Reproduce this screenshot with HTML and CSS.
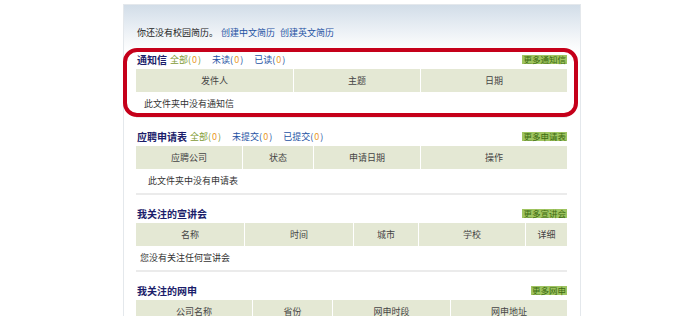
FILE: index.html
```html
<!DOCTYPE html>
<html lang="zh-CN">
<head>
    <meta charset="UTF-8">
    <title>我的求职中心</title>
    <link rel="stylesheet" href="styles.css">
</head>
<body>
    <div class="page">
        <p class="intro">你还没有校园简历。<a href="#">创建中文简历</a> <a href="#">创建英文简历</a></p>

        <!-- 通知信 -->
        <div class="box">
            <div class="box-head">
                <h2>通知信</h2>
                <a class="filter all" href="#">全部(<em>0</em>)</a>
                <a class="filter" href="#">未读(<em>0</em>)</a>
                <a class="filter" href="#">已读(<em>0</em>)</a>
                <a class="more" href="#">更多通知信</a>
            </div>
            <div class="thead cols-mail">
                <div>发件人</div><div>主题</div><div>日期</div>
            </div>
            <div class="empty">此文件夹中没有通知信</div>
        </div>

        <!-- 应聘申请表 -->
        <div class="box">
            <div class="box-head">
                <h2>应聘申请表</h2>
                <a class="filter all" href="#">全部(<em>0</em>)</a>
                <a class="filter" href="#">未提交(<em>0</em>)</a>
                <a class="filter" href="#">已提交(<em>0</em>)</a>
                <a class="more" href="#">更多申请表</a>
            </div>
            <div class="thead cols-apply">
                <div>应聘公司</div><div>状态</div><div>申请日期</div><div>操作</div>
            </div>
            <div class="empty empty-apply">此文件夹中没有申请表</div>
        </div>

        <!-- 宣讲会 -->
        <div class="box">
            <div class="box-head">
                <h2>我关注的宣讲会</h2>
                <a class="more" href="#">更多宣讲会</a>
            </div>
            <div class="thead cols-talk">
                <div>名称</div><div>时间</div><div>城市</div><div>学校</div><div>详细</div>
            </div>
            <div class="empty empty-talk">您没有关注任何宣讲会</div>
        </div>

        <!-- 网申 -->
        <div class="box">
            <div class="box-head">
                <h2>我关注的网申</h2>
                <a class="more" href="#">更多网申</a>
            </div>
            <div class="thead cols-online">
                <div>公司名称</div><div>省份</div><div>网申时段</div><div>网申地址</div>
            </div>
            <div class="empty">您没有关注任何网申</div>
        </div>
    </div>

    <div class="mark"></div>
</body>
</html>
```

FILE: styles.css
```css
body {
    margin: 0;
    background: #fff;
    font-family: "Noto Sans CJK SC", "Noto Sans", sans-serif;
    font-size: 9px;
    color: #333;
}
a {
    text-decoration: none;
}
.page {
    margin: 4px 0 0 123px;
    width: 431px;
    padding: 18px 13px 0 12px;
    border: 1px solid #e4e8ec;
    border-bottom: none;
    background: linear-gradient(to bottom, #d2dde8 0, #e4ebf2 18px, #f6f8fa 36px, #fff 48px) no-repeat;
    min-height: 400px;
}
.intro {
    margin: 0 0 6px;
    padding-left: 1px;
    height: 20px;
    line-height: 20px;
    color: #222;
}
.intro a {
    color: #1d51a3;
    margin-left: 3px;
}
.box {
    border-bottom: 2px solid #ebebeb;
    margin-bottom: 8px;
}
.box-head {
    display: flex;
    align-items: center;
    height: 20px;
    padding-left: 1px;
}
.box-head h2 {
    margin: 0 3px 0 0;
    font-size: 10px;
    font-weight: bold;
    color: #1b1d6a;
}
.filter {
    color: #1d51a3;
    margin-right: 11px;
}
.filter.all {
    color: #7f9a34;
}
.filter em {
    font-style: normal;
    color: #eb9a2a;
    padding: 0 1px;
}
.more {
    margin-left: auto;
    font-size: 8.5px;
    line-height: 9px;
    background: #9fc460;
    color: #3c6b12;
    padding: 0 1px;
}
.thead {
    display: grid;
    gap: 1px;
    height: 23px;
}
.thead div {
    background: #e4e8d4;
    color: #444;
    text-align: center;
    line-height: 23px;
}
.cols-mail {
    grid-template-columns: 157px 126px 146px;
}
.cols-apply {
    grid-template-columns: 106px 70px 106px 146px;
}
.cols-talk {
    grid-template-columns: 108px 108px 64px 106px 41px;
}
.cols-online {
    grid-template-columns: 116px 79px 117px 116px;
}
.empty {
    height: 24px;
    line-height: 24px;
    padding-left: 8px;
}
.empty-apply {
    padding-left: 12px;
}
.empty-talk {
    padding-left: 4px;
}
.mark {
    position: absolute;
    top: 48px;
    left: 123px;
    width: 455px;
    height: 69px;
    box-sizing: border-box;
    border: 4px solid #c5001a;
    border-radius: 14px;
}
```
